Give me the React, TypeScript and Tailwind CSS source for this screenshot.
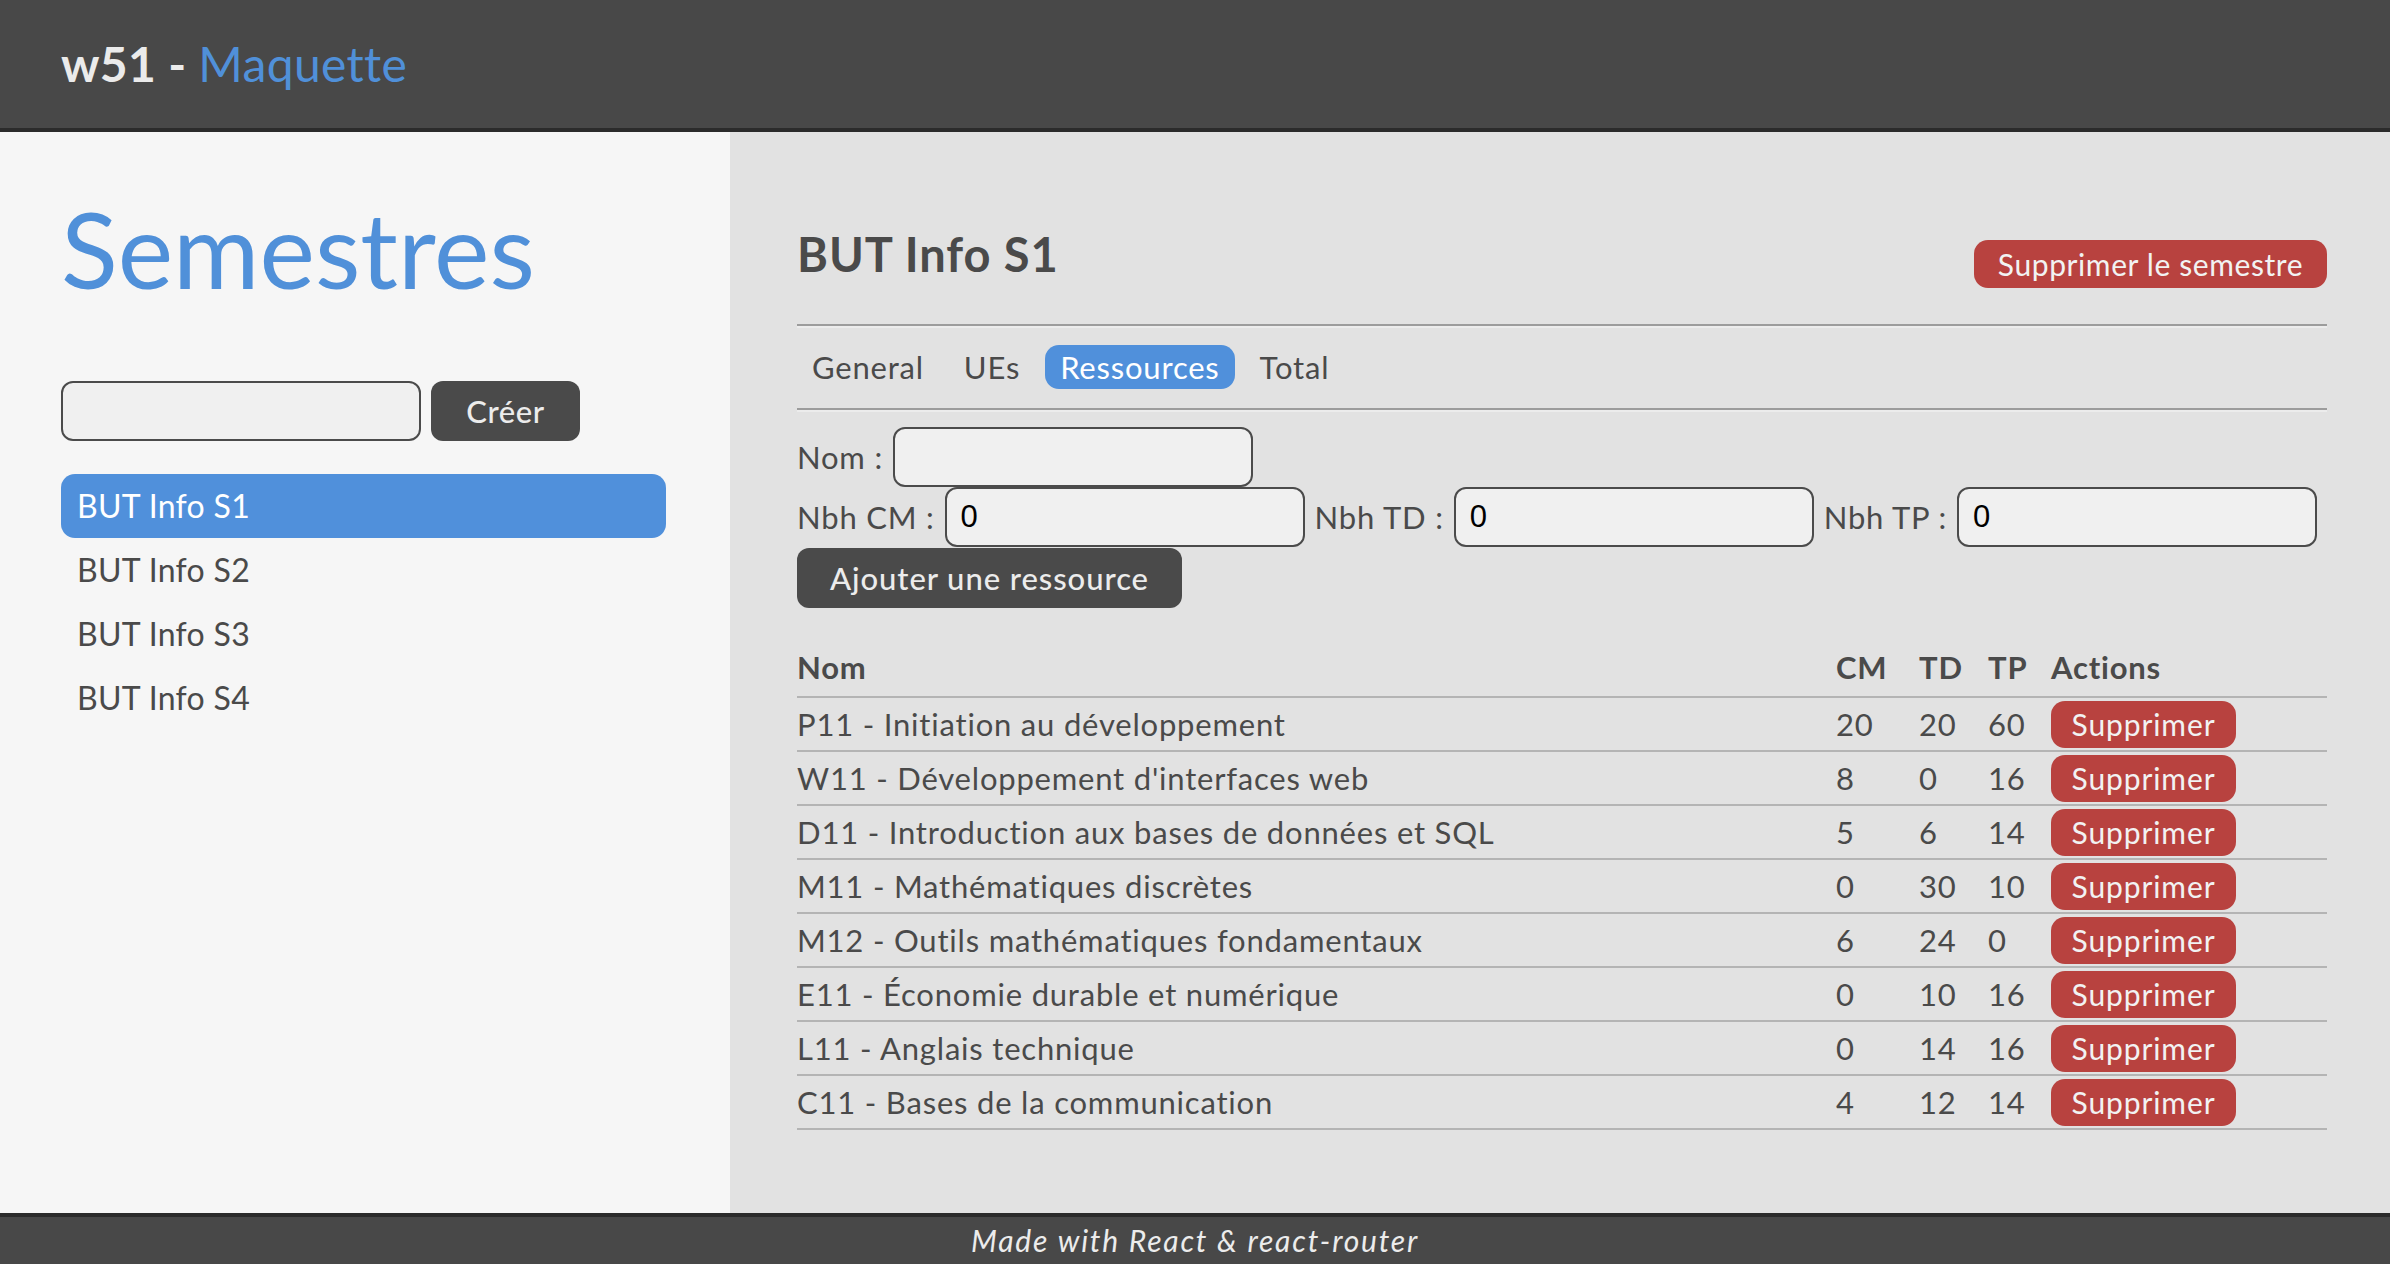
import React from "react";

const semestres = ["BUT Info S1", "BUT Info S2", "BUT Info S3", "BUT Info S4"];

const ressources = [
  { nom: "P11 - Initiation au développement", cm: 20, td: 20, tp: 60 },
  { nom: "W11 - Développement d'interfaces web", cm: 8, td: 0, tp: 16 },
  { nom: "D11 - Introduction aux bases de données et SQL", cm: 5, td: 6, tp: 14 },
  { nom: "M11 - Mathématiques discrètes", cm: 0, td: 30, tp: 10 },
  { nom: "M12 - Outils mathématiques fondamentaux", cm: 6, td: 24, tp: 0 },
  { nom: "E11 - Économie durable et numérique", cm: 0, td: 10, tp: 16 },
  { nom: "L11 - Anglais technique", cm: 0, td: 14, tp: 16 },
  { nom: "C11 - Bases de la communication", cm: 4, td: 12, tp: 14 },
];

const tabs = ["General", "UEs", "Ressources", "Total"];

function Field({ value }: { value?: string }) {
  return (
    <div className="w-[360px] h-[60px] shrink-0 rounded-[12px] border-2 border-[#4b4b4b] bg-[#f0f0f0] flex items-center pl-[14px] text-[31px] tracking-normal text-black font-['Liberation_Sans',sans-serif]">
      {value}
    </div>
  );
}

function Divider() {
  return <div className="w-full border-t-2 border-b-2 border-t-[#9c9c9c] border-b-[#ececec]" />;
}

export default function App() {
  return (
    <div className="h-screen flex flex-col font-['Lato',sans-serif] text-[#4a4a4a] tracking-[0.02em]">
      {/* Top bar */}
      <header className="h-[132px] shrink-0 bg-[#484848] border-b-4 border-[#2b2b2b] flex items-center pl-[61px] text-[48px]">
        <span className="font-bold text-[#ebebeb]">w51 -&nbsp;</span>
        <span className="text-[#5090d9]">Maquette</span>
      </header>

      <div className="flex-1 flex min-h-0">
        {/* Sidebar */}
        <aside className="w-[730px] shrink-0 bg-[#f6f6f6] pl-[61px] pr-[64px] pt-[64px]">
          <h1 className="text-[105px] leading-none text-[#5090d9] tracking-normal">Semestres</h1>
          <div className="mt-[80px] flex gap-[10px]">
            <Field />
            <button className="w-[149px] h-[60px] rounded-[12px] bg-[#4a4a4a] text-[#ececec] text-[31px] font-medium tracking-[0.02em]">
              Créer
            </button>
          </div>
          <ul className="mt-[33px]">
            {semestres.map((s, i) => (
              <li
                key={s}
                className={
                  "h-[64px] flex items-center pl-[16px] text-[32px] rounded-[14px] " +
                  (i === 0 ? "bg-[#5090db] text-white" : "")
                }
              >
                {s}
              </li>
            ))}
          </ul>
        </aside>

        {/* Main */}
        <main className="flex-1 bg-[#e2e2e2] pl-[67px] pr-[63px] pt-[99px] tracking-[0.05em]">
          <div className="flex justify-between items-start">
            <h2 className="text-[47px] leading-none font-bold tracking-[0.02em]">BUT Info S1</h2>
            <button className="mt-[9px] h-[48px] w-[353px] rounded-[14px] bg-[#b8423f] text-[#f2f2f2] text-[30px] tracking-[0.02em]">
              Supprimer le semestre
            </button>
          </div>

          <div className="mt-[36px]">
            <Divider />
          </div>

          <nav className="mt-[17px] flex gap-[10px] text-[31px]">
            {tabs.map((t) => (
              <span
                key={t}
                className={
                  "h-[44px] flex items-center px-[15px] rounded-[14px] " +
                  (t === "Ressources" ? "bg-[#5090db] text-white" : "")
                }
              >
                {t}
              </span>
            ))}
          </nav>

          <div className="mt-[19px]">
            <Divider />
          </div>

          <form className="mt-[15px] flex flex-col text-[31px]">
            <div className="flex items-center gap-[10px]">
              <label>Nom :</label>
              <Field />
            </div>
            <div className="flex items-center gap-[10px]">
              <label>Nbh CM :</label>
              <Field value="0" />
              <label>Nbh TD :</label>
              <Field value="0" />
              <label>Nbh TP :</label>
              <Field value="0" />
            </div>
            <button
              type="button"
              className="mt-[1px] self-start h-[60px] w-[385px] rounded-[12px] bg-[#4a4a4a] text-[#ececec] text-[31px] font-medium tracking-[0.03em]"
            >
              Ajouter une ressource
            </button>
          </form>

          <table className="mt-[35px] w-full table-fixed border-collapse text-[31px]">
            <thead>
              <tr className="border-b-2 border-[#b4b4b4]">
                <th className="w-[1039px] h-[54px] pb-[4px] text-left font-bold">Nom</th>
                <th className="w-[83px] pb-[4px] text-left font-bold">CM</th>
                <th className="w-[69px] pb-[4px] text-left font-bold">TD</th>
                <th className="w-[63px] pb-[4px] text-left font-bold">TP</th>
                <th className="pb-[4px] text-left font-bold">Actions</th>
              </tr>
            </thead>
            <tbody>
              {ressources.map((r) => (
                <tr key={r.nom} className="border-b-2 border-[#b4b4b4]">
                  <td className="h-[54px]">{r.nom}</td>
                  <td>{r.cm}</td>
                  <td>{r.td}</td>
                  <td>{r.tp}</td>
                  <td>
                    <button className="h-[47px] w-[185px] rounded-[14px] bg-[#b8423f] text-[#f2f2f2] text-[30px] tracking-[0.03em]">
                      Supprimer
                    </button>
                  </td>
                </tr>
              ))}
            </tbody>
          </table>
        </main>
      </div>

      {/* Footer */}
      <footer className="h-[51px] shrink-0 bg-[#484848] border-t-4 border-[#2b2b2b] flex items-center justify-center italic text-[30px] tracking-[0.06em] text-[#ececec]">
        Made with React &amp; react-router
      </footer>
    </div>
  );
}
